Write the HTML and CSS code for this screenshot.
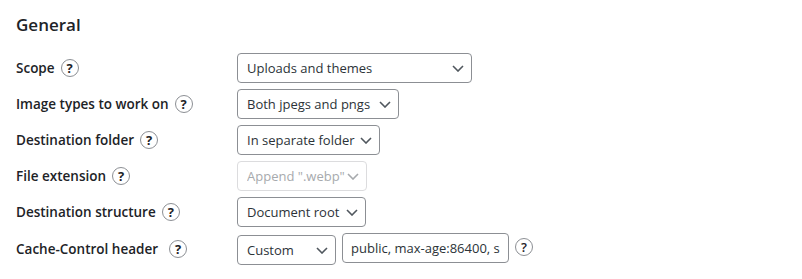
FILE: index.html
```html
<!DOCTYPE html>
<html>
<head>
<meta charset="utf-8">
<link rel="stylesheet" href="styles.css">
</head>
<body>
<div class="page">
  <h2 class="title">General</h2>
  <div class="form">
    <div class="row">
      <div class="label">Scope <span class="help">?</span></div>
      <div class="control"><div class="select w-scope"><span>Uploads and themes</span><svg class="chev" viewBox="0 0 12 7"><path d="M1 1l5 5 5-5"/></svg></div></div>
    </div>
    <div class="row">
      <div class="label">Image types to work on <span class="help">?</span></div>
      <div class="control"><div class="select w-types"><span>Both jpegs and pngs</span><svg class="chev" viewBox="0 0 12 7"><path d="M1 1l5 5 5-5"/></svg></div></div>
    </div>
    <div class="row">
      <div class="label">Destination folder <span class="help">?</span></div>
      <div class="control"><div class="select w-folder"><span>In separate folder</span><svg class="chev" viewBox="0 0 12 7"><path d="M1 1l5 5 5-5"/></svg></div></div>
    </div>
    <div class="row">
      <div class="label">File extension <span class="help">?</span></div>
      <div class="control"><div class="select disabled w-ext"><span>Append ".webp"</span><svg class="chev" viewBox="0 0 12 7"><path d="M1 1l5 5 5-5"/></svg></div></div>
    </div>
    <div class="row">
      <div class="label">Destination structure <span class="help">?</span></div>
      <div class="control"><div class="select w-struct"><span>Document root</span><svg class="chev" viewBox="0 0 12 7"><path d="M1 1l5 5 5-5"/></svg></div></div>
    </div>
    <div class="row">
      <div class="label">Cache-Control header <span class="help wide">?</span></div>
      <div class="control">
        <div class="select w-cache low"><span>Custom</span><svg class="chev" viewBox="0 0 12 7"><path d="M1 1l5 5 5-5"/></svg></div>
        <div class="input">public, max-age:86400, s</div>
        <span class="help light">?</span>
      </div>
    </div>
  </div>
</div>
</body>
</html>
```
FILE: styles.css
```css
html, body { margin: 0; padding: 0; background: #fff; }
body {
  font-family: "Open Sans", "Noto Sans", sans-serif;
  font-size: 13.5px;
  color: #1d2327;
}
.page { padding: 13px 16px 0 16px; }
.title {
  margin: 0 0 17px 0;
  font-size: 17px;
  line-height: 23px;
  font-weight: 600;
  color: #1d2327;
}
.form { display: flex; flex-direction: column; gap: 6px; }
.row {
  display: grid;
  grid-template-columns: 221px 1fr;
  align-items: center;
  min-height: 30px;
}
.label {
  font-weight: 600;
  display: flex;
  align-items: center;
  white-space: nowrap;
}
.help {
  display: inline-flex;
  align-items: center;
  justify-content: center;
  box-sizing: border-box;
  width: 18px;
  height: 18px;
  border: 1px solid #8c8f94;
  border-radius: 50%;
  margin-left: 6px;
  font-size: 13px;
  font-weight: 700;
  color: #1d2327;
  line-height: 1;
}
.help.wide { margin-left: 11px; }
.control { display: flex; align-items: flex-start; gap: 6px; }
.control .help.light { font-weight: 600; margin-left: 0; margin-top: 5px; }
.select, .input {
  box-sizing: border-box;
  height: 30px;
  border: 1px solid #8c8f94;
  border-radius: 4px;
  display: flex;
  align-items: center;
  padding: 0 7px 0 9px;
  color: #2c3338;
  white-space: nowrap;
  overflow: hidden;
  font-size: 13px;
}
.select span { flex: 1; overflow: hidden; }
.chev {
  width: 12px;
  height: 7px;
  flex: none;
  fill: none;
  stroke: #50575e;
  stroke-width: 1.6;
}
.select.disabled { border-color: #dcdcde; color: #a7aaad; }
.select.disabled .chev { stroke: #a7aaad; }
.low { margin-top: 2px; }
.w-scope { width: 235px; }
.w-types { width: 162px; }
.w-folder { width: 143px; }
.w-ext { width: 130px; }
.w-struct { width: 129px; }
.w-cache { width: 99px; }
.input { width: 167px; padding-left: 8px; }
```
